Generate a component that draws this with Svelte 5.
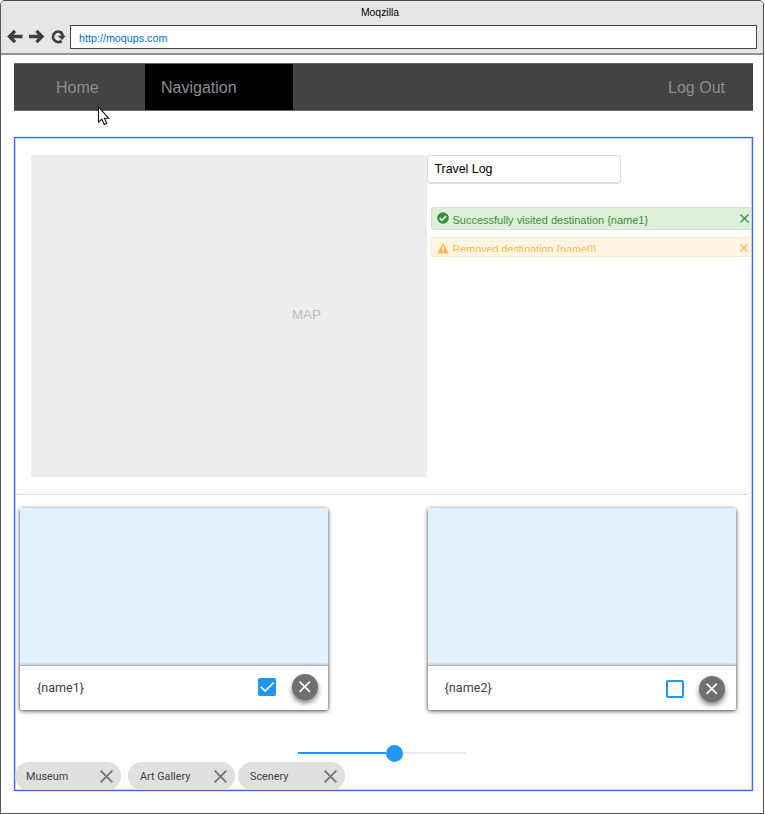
<script>
  const cards = [
    { name: '{name1}', checked: true },
    { name: '{name2}', checked: false }
  ];
  const tags = ['Museum', 'Art Gallery', 'Scenery'];
</script>

{#snippet cross(size, width)}
  <svg class="cross" width={size} height={size} viewBox="0 0 12 12" fill="none" stroke="currentColor" stroke-width={width}>
    <path d="M.6.6 11.4 11.4M11.4.6.6 11.4" />
  </svg>
{/snippet}

<div class="window">
  <header>
    <div class="title">Moqzilla</div>
    <div class="toolbar">
      <svg class="controls" width="59" height="16" viewBox="0 0 59 16" fill="none" stroke="#3e3e3e" stroke-width="3.3">
        <path d="M2.5 7.5h13M8 1.8 2.5 7.5 8 13.2" />
        <path d="M22 7.5h13M29.5 1.8 35 7.5l-5.5 5.7" />
        <path d="M54.6 11.8a5.2 5.2 0 1 1 0-8" stroke-width="2.8" />
        <path d="M50.6 6.8h8.2L55 11z" fill="#3e3e3e" stroke="none" />
        <path d="M53.5 3.3q2.2 1.4 2 4" stroke-width="2.8" />
      </svg>
      <div class="address">http://moqups.com</div>
    </div>
  </header>

  <nav>
    <span class="home">Home</span>
    <span class="active">Navigation</span>
    <span class="logout">Log Out</span>
    <svg class="pointer" width="13" height="20" viewBox="0 0 13 20">
      <path d="M1.5 1v15.3l3.3-3.1 2.5 5.3 2.5-1.2-2.4-5h4.4z" fill="#fff" stroke="#101020" stroke-width="1.1" />
    </svg>
  </nav>

  <main>
    <section class="overview">
      <div class="map">MAP</div>
      <div class="log">
        <div class="log-title">Travel Log</div>
        <div class="alert success">
          <svg width="12" height="12" viewBox="0 0 12 12"><circle cx="6" cy="6" r="5.8" fill="currentColor" /><path d="m2.7 6.1 2.3 2.2 4.2-4.4" fill="none" stroke="#dff0d8" stroke-width="1.7" /></svg>
          <span class="message">Successfully visited destination {'{name1}'}</span>
          {@render cross(9, 1.7)}
        </div>
        <div class="alert warning">
          <svg width="12" height="12" viewBox="0 0 12 12"><path d="M6 .4 11.7 11.5H.3z" fill="currentColor" /><path d="M6 4v3.8M6 8.7v1.5" stroke="#fff" stroke-width="1.4" /></svg>
          <span class="message">Removed destination {'{name0}'}</span>
          {@render cross(8, 1.9)}
        </div>
      </div>
    </section>

    <section class="cards">
      {#each cards as card}
        <article>
          <div class="picture"></div>
          <div class="details" class:lower={!card.checked}>
            <span class="name">{card.name}</span>
            <span class="box" class:checked={card.checked}>
              {#if card.checked}
                <svg width="18" height="18" viewBox="0 0 18 18" fill="none" stroke="#fff" stroke-width="1.6"><path d="m2.8 8.8 4.3 4.3 8.6-8.6" /></svg>
              {/if}
            </span>
            <span class="remove">{@render cross(11.5, 1.7)}</span>
          </div>
        </article>
      {/each}
    </section>

    <div class="slider"><span class="fill"></span><span class="knob"></span><span class="rest"></span></div>

    <div class="tags">
      {#each tags as tag}
        <span class="tag">{tag}{@render cross(13, 1.7)}</span>
      {/each}
    </div>
  </main>
</div>

<style>
  :global(body) { background: #fff; overflow: hidden; }
  * { box-sizing: border-box; }
  svg { display: block; flex: none; }
  .window {
    width: 764px; height: 814px;
    border: 1px solid #555; border-top-color: #484648; border-radius: 5px 5px 0 0;
    background: #fff; overflow: hidden;
    font-family: "Liberation Sans", Arial, sans-serif;
  }
  header { height: 54px; background: #e6e6e6; border-bottom: 2px solid #929292; }
  .title { height: 24px; padding-right: 4px; text-align: center; font-size: 10.4px; line-height: 23px; color: #000; }
  .toolbar { display: flex; padding-left: 6px; }
  .controls { margin-top: 4px; }
  .address {
    width: 687px; height: 24px; margin-left: 4px; padding-left: 8px;
    border: 1px solid #444; background: #fff;
    color: #0070e0; font-size: 10.75px; line-height: 24px;
  }
  nav {
    position: relative; display: flex; width: 739px; height: 48px; margin: 8px 0 0 13px;
    background: #434343; border-top: 1px solid #666; border-bottom: 1px solid #666;
    color: #8d8d8d; font-size: 16px; line-height: 47px;
  }
  .home { width: 131px; padding-left: 42px; }
  .active { width: 148px; padding-left: 16px; background: #000; }
  .logout { margin-left: auto; padding-right: 28px; }
  .pointer { position: absolute; left: 83px; top: 42px; }
  main {
    width: 739px; height: 654px; margin: 26px 0 0 13px;
    border: 1px solid #4169e1;
    box-shadow: inset 0 0 0 1px #c3d0f6, 0 0 0 .5px #c3d0f6;
    padding-top: 17px; overflow: hidden;
  }
  .overview { display: flex; height: 340px; margin: 0 1px; padding-left: 15.4px; border-bottom: 1px solid #ddd; border-radius: 0 0 4px 4px; }
  .map { width: 396px; height: 322px; padding-left: 260.5px; background: #ededed; color: #bdbdbd; font-size: 13.4px; line-height: 320px; }
  .log { flex: 1; }
  .log-title { width: 194px; height: 29px; padding-left: 6px; border: 1px solid #ddd; border-bottom-width: 2px; border-radius: 4px; font-size: 12.4px; line-height: 26px; color: #000; }
  .alert { display: flex; align-items: flex-start; margin-left: 3.6px; padding: 4px 2px 0 6px; border: 1px solid; border-right: 0; border-radius: 3px 0 0 3px; font-size: 11px; }
  .success { height: 23px; margin-top: 23px; color: #388e3c; background: #dff0d8; border-color: #d2e9c8; }
  .warning { height: 20px; margin-top: 7px; padding-right: 3px; color: #ffb74d; background: #fdf5e1; border-color: #faebcc; font-size: 10.75px; }
  .message { flex: 1; height: 15px; margin: 1px 0 0 3px; overflow: hidden; line-height: 15px; white-space: nowrap; }
  .warning .message { height: 10px; margin-top: 0; line-height: 14px; }
  .alert .cross { margin-top: 2px; }
  .alert svg:first-child { margin-left: -.5px; }
  .cards { display: flex; gap: 99.6px; margin: 13px 0 0 5px; }
  article { width: 308px; height: 202px; background: #fff; border-radius: 2px; box-shadow: 0 1px 4px rgba(0,0,0,.75); }
  .picture { height: 157px; background: #e3f1fc; }
  .details { display: flex; height: 45px; padding: 12px 10px 0 17px; border-top: 1px solid #aeb2b5; box-shadow: 0 -1px 2px rgba(0,0,0,.2); font: 12.6px Roboto, sans-serif; color: #424242; }
  .name { flex: 1; line-height: 20px; }
  .box { width: 18px; height: 18px; border: 2px solid #2196f3; border-radius: 2px; background: #fafafa; }
  .checked { border: 0; background: #2196f3; }
  .remove { display: grid; place-items: center; width: 26px; height: 26px; margin: -4px 0 0 16px; border-radius: 50%; background: #707070; color: #fff; box-shadow: 0 3px 5px rgba(0,0,0,.5); }
  .lower { padding-right: 10.6px; }
  .lower .box { margin-top: 2px; }
  .lower .remove { margin: -2px 0 0 15px; }
  .slider { display: flex; align-items: center; width: 168px; height: 18px; margin: 34px 0 0 283px; }
  .fill { width: 88px; height: 2px; background: #2196f3; }
  .knob { width: 17px; height: 17px; border-radius: 50%; background: #2196f3; }
  .rest { flex: 1; height: 2px; background: #e8eaf6; }
  .tags { display: flex; }
  .tag { display: flex; align-items: center; justify-content: space-between; width: 107px; height: 28px; padding: 0 8px 0 12px; border-radius: 14px; background: #e0e0e0; color: #424242; font: 10.8px Roboto, sans-serif; }
  .tag:first-child { width: 106px; padding-left: 11px; }
  .tag + .tag { margin-left: 7px; }
  .tag:last-child { margin-left: 3px; }
  .tag .cross { color: #757575; }
</style>
